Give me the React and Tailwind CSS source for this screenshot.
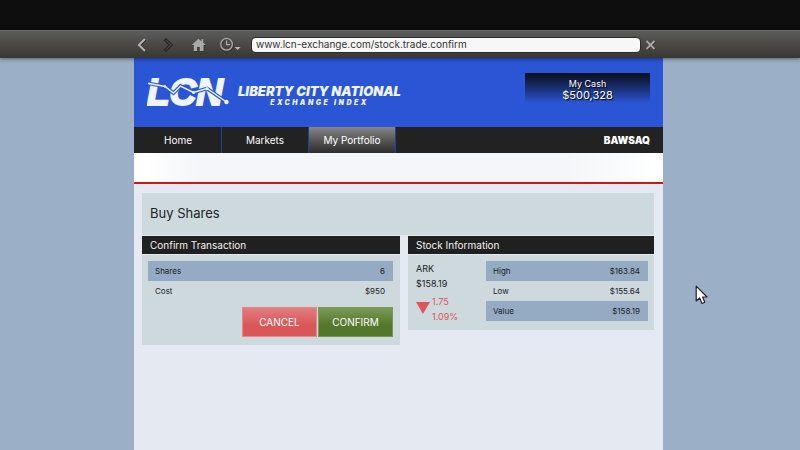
import React from 'react';

function NavTab({ label, active }) {
  return (
    <a
      href="#"
      aria-current={active ? 'page' : undefined}
      className={
        'flex w-[87px] items-center justify-center border-r border-[#233f9c] text-[10px] text-white ' +
        (active ? 'bg-linear-to-b from-[#868686] to-[#2e2e2e]' : 'bg-[#222222]')
      }
    >
      {label}
    </a>
  );
}

function DataTable({ label, rows }) {
  return (
    <table aria-label={label} className="w-full border-collapse text-[8px] text-[#1c2023]">
      <tbody>
        {rows.map(([name, value], i) => (
          <tr key={name} className={'h-5 ' + (i % 2 === 0 ? 'bg-[#94abc3]' : '')}>
            <th scope="row" className="p-0 pl-[7px] text-left font-normal">{name}</th>
            <td className="p-0 pr-2 text-right">{value}</td>
          </tr>
        ))}
      </tbody>
    </table>
  );
}

function PanelTitle({ children }) {
  return (
    <h2 className="mb-px flex h-[18px] items-center bg-[#202020] px-2 text-[10px] text-[#f2f2f2]">
      {children}
    </h2>
  );
}

function Toolbar() {
  return (
    <div className="relative z-10 flex h-[28px] items-center border-t border-[#6a6a69] bg-linear-to-b from-[#5c5c5b] to-[#383733] pr-[143px] pl-[134px] shadow-[0_1px_4px_rgba(0,0,0,0.45)]">
      <button type="button" aria-label="Back" className="flex w-[27px] pl-[2px]">
        <svg width="12" height="14" viewBox="0 0 12 14" fill="none">
          <path d="M9.500 1.500 4 7.500 9.500 13.500" stroke="#262625" strokeWidth="2.200" />
          <path d="M9 1 3 7 9 13" stroke="#b4b4b2" strokeWidth="2" />
        </svg>
      </button>
      <button type="button" aria-label="Forward" className="flex w-[30px] pl-[2px]">
        <svg width="12" height="14" viewBox="0 0 12 14" fill="none">
          <path d="M1.500 2.200 3 .8 9.500 7 3 13.200 1.500 11.800 6.300 7Z" fill="#4c4c4a" stroke="#282827" strokeWidth="1.200" />
        </svg>
      </button>
      <button type="button" aria-label="Home" className="flex w-[28px]">
        <svg width="16" height="14" viewBox="0 0 16 14">
          <path d="M8 1.6 1.4 7.8h2V13.6h3.4V9.6h2.8v4h3.8V7.8h2L12.8 5.4V2h-2v1.8Z" fill="#292928" />
          <path d="M7.4.8.8 7h2v6h3.4V9h2.6v4h3.8V7h2L12.4 4.8V1.2h-2v2Z" fill="#a9a9a7" />
        </svg>
      </button>
      <button type="button" aria-label="History" className="flex w-[33px]">
        <svg width="23" height="15" viewBox="0 0 23 15" fill="none">
          <circle cx="8.200" cy="8" r="5.800" stroke="#2b2b2a" strokeWidth="1.500" />
          <circle cx="7.600" cy="7.300" r="5.800" stroke="#a9a9a7" strokeWidth="1.400" />
          <path d="M7.600 3.400V7.600H11" stroke="#a9a9a7" strokeWidth="1.200" />
          <path d="M15.600 10H21.600L18.600 13Z" fill="#b4b4b2" />
        </svg>
      </button>
      <input
        type="text"
        aria-label="Address"
        defaultValue="www.lcn-exchange.com/stock.trade.confirm"
        className="h-[14px] min-w-0 flex-1 rounded-[4px] bg-[#f7f7f7] px-1 text-[10px] text-[#333333] shadow-[0_0_0_1px_#2c2c2b] outline-none"
      />
      <button type="button" aria-label="Close" className="ml-[5px] flex w-[12px]">
        <svg width="12" height="12" viewBox="0 0 12 12" fill="none">
          <path d="M2 2.500 10 10.500M10 2.500 2 10.500" stroke="#2b2b2a" strokeWidth="2" />
          <path d="M1.500 2 9.500 10M9.500 2 1.500 10" stroke="#aaaaa8" strokeWidth="1.800" />
        </svg>
      </button>
    </div>
  );
}

const trend = 'M2 13.500 18 16.500 26.500 23 33.500 16 46.500 22.500 60 18.500 79.500 32';

function Logo() {
  return (
    <div className="flex items-center gap-[6px] text-[#f0f4ff]">
      <svg width="85" height="46" viewBox="0 0 85 46" role="img" aria-label="LCN">
        <text x="0" y="35" fontSize="37" fontWeight="700" fontStyle="italic" fill="#f0f4ff" stroke="#f0f4ff" strokeWidth="2" fontFamily="'Liberation Sans', Arial, sans-serif">LCN</text>
        <path d={trend} fill="none" stroke="#2a55d5" strokeWidth="3.600" />
        <path d={trend} fill="none" stroke="#f0f4ff" strokeWidth="1.400" />
        <circle cx="2" cy="13.500" r="1" fill="#f0f4ff" />
        <circle cx="18" cy="16.500" r="1.200" fill="#f0f4ff" />
        <circle cx="46.500" cy="22.500" r="1.500" fill="#f0f4ff" />
        <circle cx="60" cy="18.500" r="1.500" fill="#f0f4ff" />
        <circle cx="79.500" cy="32" r="2.200" fill="#f0f4ff" />
      </svg>
      <div className="pt-[7px] text-center font-black italic">
        <div className="text-[13px] leading-[14px] whitespace-nowrap">LIBERTY CITY NATIONAL</div>
        <div className="text-[7px] leading-[10px] tracking-[0.35em] whitespace-nowrap">EXCHANGE INDEX</div>
      </div>
    </div>
  );
}

export default function App() {
  return (
    <div className="relative flex min-h-screen flex-col bg-[#9bb0c6] font-['Inter',sans-serif]">
      <div className="h-[30px] bg-[#0e0e0e]" />
      <Toolbar />
      <div className="flex flex-1 flex-col pr-[137px] pl-[134px]">
        <div className="flex flex-1 flex-col bg-[#e5eaf2]">
          <header className="flex h-[69px] items-center justify-between bg-[#2a55d5] pr-[13px] pl-[13px]">
            <Logo />
            <div className="mb-[9px] flex h-[30px] w-[125px] flex-col items-center bg-linear-to-b from-[#090d1c] to-[#2a55d5] pt-[5px] text-white [text-shadow:1px_1px_1px_#000]">
              <div className="text-[9px] leading-[11px]">My Cash</div>
              <div className="text-[11px] leading-[13px]">$500,328</div>
            </div>
          </header>
          <nav className="flex h-[26px] justify-between bg-[#222222] pr-[13px] pl-px">
            <div className="flex">
              <NavTab label="Home" />
              <NavTab label="Markets" />
              <NavTab label="My Portfolio" active />
            </div>
            <a href="#" className="flex items-center text-[10px] font-black text-white">BAWSAQ</a>
          </nav>
          <div className="h-[31px] border-b-2 border-[#d01616] bg-linear-to-r from-white from-2% via-[#f4f6f9] via-12% to-[#f4f6f9] to-82%">
            <div className="ml-auto h-full w-[18%] bg-linear-to-r from-[#f4f6f9] to-white" />
          </div>
          <main className="flex flex-col pt-[9px] pr-[9px] pl-[8px]">
            <h1 className="mb-px flex h-[42px] items-center bg-[#cdd9dd] px-2 text-[13px] text-[#202325]">Buy Shares</h1>
            <div className="flex items-start gap-2">
              <section className="flex-[258]">
                <PanelTitle>Confirm Transaction</PanelTitle>
                <div className="bg-[#cdd9dd] pt-[6px] pr-[7px] pb-2 pl-[6px]">
                  <DataTable label="Confirm Transaction" rows={[['Shares', '6'], ['Cost', '$950']]} />
                  <div className="mt-[6px] flex justify-end gap-px">
                    <button type="button" className="h-[30px] w-[75px] border border-[#e08a8c] bg-linear-to-b from-[#e27d7e] to-[#d95759] to-60% text-[10px] text-white">CANCEL</button>
                    <button type="button" className="h-[30px] w-[75px] border border-[#7b9a5a] bg-linear-to-b from-[#7b9a58] to-[#54782b] to-60% text-[10px] text-white">CONFIRM</button>
                  </div>
                </div>
              </section>
              <section className="flex-[246]">
                <PanelTitle>Stock Information</PanelTitle>
                <div className="flex bg-[#cdd9dd] pt-[6px] pr-[6px] pb-[6px] pl-2">
                  <div className="w-[70px] text-[9px] text-[#1c2023]">
                    <div className="leading-[15px]">ARK</div>
                    <div className="leading-[15px]">$158.19</div>
                    <div className="flex items-center gap-[2px] pt-[3px] text-[#dd5659]">
                      <svg width="14" height="14" viewBox="0 0 14 14" aria-hidden="true">
                        <path d="M0 0H14L7 12Z" fill="#dd5659" />
                      </svg>
                      <div className="leading-[15px]">
                        <div>1.75</div>
                        <div>1.09%</div>
                      </div>
                    </div>
                  </div>
                  <div className="flex-1">
                    <DataTable label="Stock Information" rows={[['High', '$163.84'], ['Low', '$155.64'], ['Value', '$158.19']]} />
                  </div>
                </div>
              </section>
            </div>
          </main>
        </div>
      </div>
      <svg className="absolute top-[285px] left-[695px] z-20" width="14" height="20" viewBox="0 0 14 20" aria-hidden="true">
        <path d="M1.200 1.200V16L4.600 13 7 18.500 9.800 17.300 7.600 12H12Z" fill="#fff" stroke="#222" strokeWidth="1.200" strokeLinejoin="round" />
      </svg>
    </div>
  );
}
